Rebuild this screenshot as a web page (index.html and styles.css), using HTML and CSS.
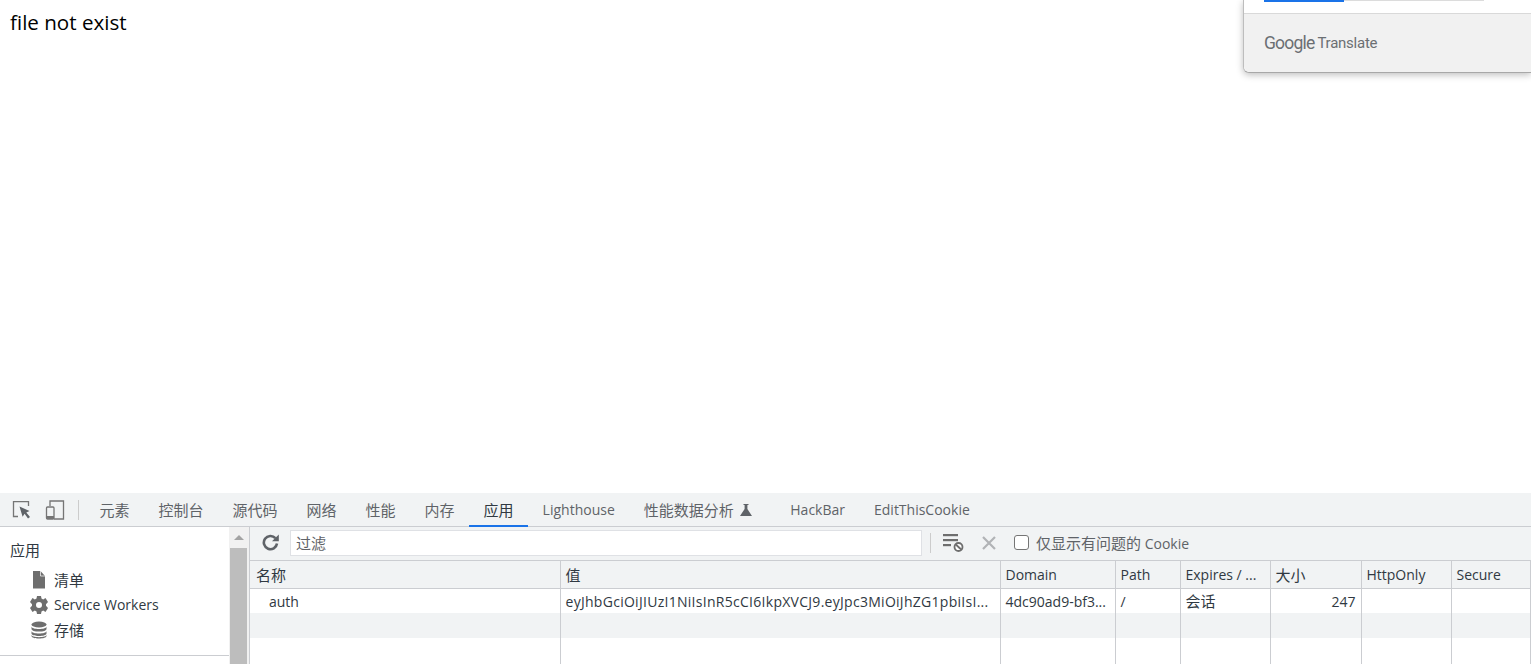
FILE: index.html
```html
<!DOCTYPE html>
<html lang="zh-CN">
<head>
    <meta charset="UTF-8">
    <title>file not exist</title>
    <link rel="stylesheet" href="styles.css">
</head>
<body>
    <!-- Page content -->
    <main class="page">
        <p class="page-text">file not exist</p>

        <!-- Translate popup, cut off by the top of the window -->
        <div class="translate-popup">
            <div class="progress">
                <div class="progress-done"></div>
            </div>
            <div class="translate-footer">
                <span class="google-word">Google</span>
                <span class="translate-word">Translate</span>
            </div>
        </div>
    </main>

    <!-- Devtools panel -->
    <section class="devtools">
        <div class="tab-bar">
            <div class="tab-tools">
                <svg class="tool-icon" width="20" height="20" viewBox="0 0 20 20">
                    <path d="M6 16.500H1.500V1.700H16.500V6" fill="none" stroke="#757575" stroke-width="1.300"/>
                    <path d="M7.500 6.500L17.500 11L14.300 12.600L18 17L16 18.500L12.600 13.800L10.600 16.800Z" fill="#5f6368"/>
                </svg>
                <svg class="tool-icon" width="20" height="20" viewBox="0 0 20 20">
                    <path d="M5 6V1H18.500V19H9" fill="none" stroke="#757575" stroke-width="1.300"/>
                    <rect x="1.500" y="7" width="7.500" height="12" rx="1" fill="none" stroke="#757575" stroke-width="1.300"/>
                    <rect x="1.500" y="16" width="7.500" height="3" fill="#757575"/>
                </svg>
                <div class="tab-divider"></div>
            </div>
            <nav class="tabs">
                <a class="tab zh">元素</a>
                <a class="tab zh">控制台</a>
                <a class="tab zh">源代码</a>
                <a class="tab zh">网络</a>
                <a class="tab zh">性能</a>
                <a class="tab zh">内存</a>
                <a class="tab zh active">应用</a>
                <a class="tab">Lighthouse</a>
                <a class="tab zh tab-flask">性能数据分析
                    <svg class="flask" width="12" height="12" viewBox="0 0 12 12">
                        <path d="M3.500 0H8.500V1H7.400V5L12 12H0L4.600 5V1H3.500Z" fill="#5f6368"/>
                    </svg>
                </a>
                <a class="tab">HackBar</a>
                <a class="tab">EditThisCookie</a>
            </nav>
        </div>

        <div class="panel">
            <!-- Left tree -->
            <aside class="sidebar">
                <div class="tree">
                    <h3 class="tree-title zh">应用</h3>
                    <div class="tree-item">
                        <svg class="tree-icon" width="18" height="18" viewBox="0 0 18 18">
                            <path d="M3 0H10.500L15 5V17.500H3Z" fill="#6e6e6e"/>
                            <path d="M10.500 0V5H15" fill="none" stroke="#fff" stroke-width="0.700"/>
                        </svg>
                        <span class="zh">清单</span>
                    </div>
                    <div class="tree-item">
                        <svg class="tree-icon" width="18" height="18" viewBox="0 0 18 18">
                            <path fill-rule="evenodd" fill="#6e6e6e" d="M7 0H11L11.500 2.600L13.200 3.400L15.500 2L18 6L16 8.200V9.800L18 12L15.500 16L13.200 14.600L11.500 15.400L11 18H7L6.500 15.400L4.800 14.600L2.500 16L0 12L2 9.800V8.200L0 6L2.500 2L4.800 3.400L6.500 2.600ZM9 6A3 3 0 1 0 9 12A3 3 0 1 0 9 6Z"/>
                        </svg>
                        <span>Service Workers</span>
                    </div>
                    <div class="tree-item">
                        <svg class="tree-icon" width="18" height="18" viewBox="0 0 18 18">
                            <ellipse cx="9" cy="3.500" rx="7.500" ry="3" fill="#6e6e6e"/>
                            <path d="M1.500 5.500V8C1.500 9.600 4.800 10.600 9 10.600S16.500 9.600 16.500 8V5.500C16.500 7.100 13.200 8 9 8S1.500 7.100 1.500 5.500Z" fill="#6e6e6e"/>
                            <path d="M1.500 10V12.500C1.500 14.100 4.800 15 9 15S16.500 14.100 16.500 12.500V10C16.500 11.600 13.200 12.500 9 12.500S1.500 11.600 1.500 10Z" fill="#6e6e6e"/>
                            <path d="M1.500 13.800V15C1.500 16.600 4.800 17.500 9 17.500S16.500 16.600 16.500 15V13.800C16.500 15.400 13.200 16.200 9 16.200S1.500 15.400 1.500 13.800Z" fill="#6e6e6e"/>
                        </svg>
                        <span class="zh">存储</span>
                    </div>
                </div>
                <div class="tree-line"></div>
            </aside>

            <div class="scrollbar">
                <div class="scroll-arrow"></div>
                <div class="scroll-thumb"></div>
            </div>

            <!-- Cookie view -->
            <div class="cookies">
                <div class="toolbar">
                    <svg class="refresh" width="17" height="17" viewBox="0 0 17 17">
                        <path d="M13.400 4.200A6.600 6.600 0 1 0 15 9.500" fill="none" stroke="#5f6368" stroke-width="2.600"/>
                        <path d="M10 7.200H16.800V0.500Z" fill="#5f6368"/>
                    </svg>
                    <input class="filter" type="text" placeholder="过滤">
                    <div class="bar-divider"></div>
                    <svg class="clear-all" width="21" height="20" viewBox="0 0 21 20">
                        <rect x="0" y="1" width="15" height="2.200" fill="#6e6e6e"/>
                        <rect x="0" y="6" width="15" height="2.200" fill="#6e6e6e"/>
                        <rect x="0" y="11" width="8" height="2.200" fill="#6e6e6e"/>
                        <circle cx="15.500" cy="14" r="4" fill="#fff" stroke="#6e6e6e" stroke-width="1.800"/>
                        <path d="M12.800 11.500L18.200 16.500" stroke="#6e6e6e" stroke-width="1.800"/>
                    </svg>
                    <svg class="clear-one" width="14" height="14" viewBox="0 0 14 14">
                        <path d="M1 1L13 13M13 1L1 13" stroke="#b1b3b6" stroke-width="2.200"/>
                    </svg>
                    <label class="only-issues">
                        <span class="check"></span>
                        <span><span class="zh">仅显示有问题的</span> Cookie</span>
                    </label>
                </div>

                <table class="cookie-table">
                    <colgroup>
                        <col class="col-name">
                        <col class="col-value">
                        <col class="col-domain">
                        <col class="col-path">
                        <col class="col-expires">
                        <col class="col-size">
                        <col class="col-http">
                        <col>
                    </colgroup>
                    <thead>
                        <tr>
                            <th class="zh">名称</th>
                            <th class="zh">值</th>
                            <th>Domain</th>
                            <th>Path</th>
                            <th>Expires / ...</th>
                            <th class="zh">大小</th>
                            <th>HttpOnly</th>
                            <th>Secure</th>
                        </tr>
                    </thead>
                    <tbody>
                        <tr>
                            <td class="cell-name cell-latin">auth</td>
                            <td class="cell-value cell-latin">eyJhbGciOiJIUzI1NiIsInR5cCI6IkpXVCJ9.eyJpc3MiOiJhZG1pbiIsI...</td>
                            <td class="cell-latin">4dc90ad9-bf3...</td>
                            <td class="cell-latin">/</td>
                            <td class="zh">会话</td>
                            <td class="cell-size cell-latin">247</td>
                            <td></td>
                            <td></td>
                        </tr>
                        <tr class="row-alt">
                            <td></td><td></td><td></td><td></td><td></td><td></td><td></td><td></td>
                        </tr>
                        <tr class="row-fill">
                            <td></td><td></td><td></td><td></td><td></td><td></td><td></td><td></td>
                        </tr>
                    </tbody>
                </table>
            </div>
        </div>
    </section>
</body>
</html>
```

FILE: styles.css
```css
/* Basic Reset */
* {
    margin: 0;
    padding: 0;
    box-sizing: border-box;
}

html, body {
    height: 100%;
    overflow: hidden;
}

body {
    display: flex;
    flex-direction: column;
    background-color: white;
    color: #303942;
    font-family: "Open Sans", "Noto Sans CJK SC", sans-serif;
    font-size: 14px;
}

/* Chinese text runs a little larger than the latin text next to it */
.zh {
    font-size: 15px;
}

/* Page content */
.page {
    flex: 1;
    position: relative;
    padding: 8px 10px;
}

.page-text {
    font-size: 20.6px;
    line-height: 28px;
    color: black;
}

/* Translate popup */
.translate-popup {
    position: absolute;
    top: 0;
    right: 0;
    width: 288px;
    height: 73px;
    background-color: white;
    border-left: 1px solid #bdbdbd;
    border-bottom: 1px solid #a8a8a8;
    border-bottom-left-radius: 6px;
    box-shadow: 0 2px 7px rgba(0, 0, 0, 0.25);
}

.progress {
    width: 220px;
    height: 1px;
    margin-left: 20px;
    background-color: #dcdcdc;
}

.progress-done {
    width: 80px;
    height: 2px;
    background-color: #1a73e8;
}

.translate-footer {
    height: 59px;
    margin-top: 12px;
    padding: 0 20px;
    display: flex;
    align-items: center;
    gap: 3px;
    background-color: #f1f1f1;
    border-top: 1px solid #d9d9d9;
    border-bottom-left-radius: 6px;
    color: #6b6f73;
}

.google-word {
    font-family: "Roboto", sans-serif;
    font-size: 17.5px;
    letter-spacing: -0.8px;
}

.translate-word {
    font-family: "Roboto", sans-serif;
    font-size: 15px;
    letter-spacing: -0.25px;
}

/* Devtools */
.devtools {
    height: 171px;
    display: flex;
    flex-direction: column;
    background-color: #f1f3f4;
}

.tab-bar {
    height: 34px;
    display: flex;
    align-items: stretch;
    border-bottom: 1px solid #cbcdd1;
}

.tab-tools {
    width: 85px;
    display: flex;
    align-items: center;
    padding-left: 12px;
    gap: 13px;
}

.tool-icon {
    flex: none;
}

.tab-divider {
    width: 1px;
    height: 20px;
    background-color: #ccc;
}

.tabs {
    display: flex;
}

.tab {
    display: flex;
    align-items: center;
    padding: 0 14.5px;
    color: #5f6368;
    white-space: nowrap;
}

.tab.active {
    color: #303942;
    margin-bottom: -1px;
    border-bottom: 2px solid #1a73e8;
}

.tab-flask {
    padding-right: 24px;
}

.flask {
    margin-left: 6px;
}

.panel {
    flex: 1;
    min-height: 0;
    display: flex;
}

/* Left tree */
.sidebar {
    width: 229px;
    flex: none;
    background-color: white;
    overflow: hidden;
}

.tree {
    height: 128px;
    padding-top: 13px;
}

.tree-title {
    height: 22px;
    padding-left: 10px;
    font-weight: normal;
    line-height: 20px;
    margin-bottom: 5px;
}

.tree-item {
    height: 25px;
    display: flex;
    align-items: center;
    padding-left: 30px;
    gap: 6px;
}

.tree-icon {
    flex: none;
}

.tree-line {
    height: 1px;
    background-color: #cbcdd1;
}

.scrollbar {
    width: 21px;
    flex: none;
    display: flex;
    flex-direction: column;
    padding-left: 1px;
    background-color: #f1f1f1;
    border-right: 1px solid #cbcdd1;
}

.scroll-arrow {
    width: 0;
    height: 0;
    margin: 8px 0 0 3.5px;
    border-left: 5px solid transparent;
    border-right: 5px solid transparent;
    border-bottom: 5px solid #a3a3a3;
}

.scroll-thumb {
    flex: 1;
    margin: 8px 2px 0 0;
    background-color: #bdbdbd;
}

/* Cookie view */
.cookies {
    flex: 1;
    min-width: 0;
    display: flex;
    flex-direction: column;
}

.toolbar {
    height: 34px;
    flex: none;
    display: flex;
    align-items: center;
    padding-left: 12px;
    padding-bottom: 2px;
    border-bottom: 1px solid #cbcdd1;
}

.refresh {
    flex: none;
}

.filter {
    width: 632px;
    height: 26px;
    margin-left: 11px;
    padding: 0 5px;
    border: 1px solid #dfe1e5;
    background-color: white;
    font-family: inherit;
    font-size: 15px;
}

.filter::placeholder {
    color: #5f6368;
}

.bar-divider {
    width: 1px;
    height: 20px;
    margin-left: 8px;
    background-color: #ccc;
}

.clear-all {
    margin-left: 12px;
}

.clear-one {
    margin-left: 18px;
}

.only-issues {
    display: flex;
    align-items: center;
    gap: 7px;
    margin-left: 18px;
    color: #5f6368;
}

.check {
    width: 15px;
    height: 15px;
    background-color: white;
    border: 1px solid #757575;
    border-radius: 3px;
}

.cookie-table {
    flex: 1;
    width: 100%;
    table-layout: fixed;
    border-collapse: collapse;
    background-color: white;
    color: #303942;
}

.col-name { width: 310px; }
.col-value { width: 440px; }
.col-domain { width: 115px; }
.col-path { width: 65px; }
.col-expires { width: 90px; }
.col-size { width: 91px; }
.col-http { width: 90px; }

.cookie-table th,
.cookie-table td {
    padding: 0 5px;
    border-right: 1px solid #cbcdd1;
    font-weight: normal;
    text-align: left;
    white-space: nowrap;
    overflow: hidden;
}

.cookie-table th {
    height: 27px;
    background-color: #f1f3f4;
    border-bottom: 1px solid #cbcdd1;
    color: #303942;
}

.cookie-table th:first-child {
    padding-left: 6px;
}

.cookie-table td {
    height: 25px;
}

.cookie-table td.cell-latin {
    padding-top: 2px;
}

.cookie-table td.cell-name {
    padding-left: 19px;
}

.cookie-table td.cell-value {
    letter-spacing: 0.28px;
}

.cookie-table td.cell-size {
    text-align: right;
}

.row-alt td {
    background-color: #f1f3f4;
}

.cookie-table .row-fill td {
    height: auto;
}
```
